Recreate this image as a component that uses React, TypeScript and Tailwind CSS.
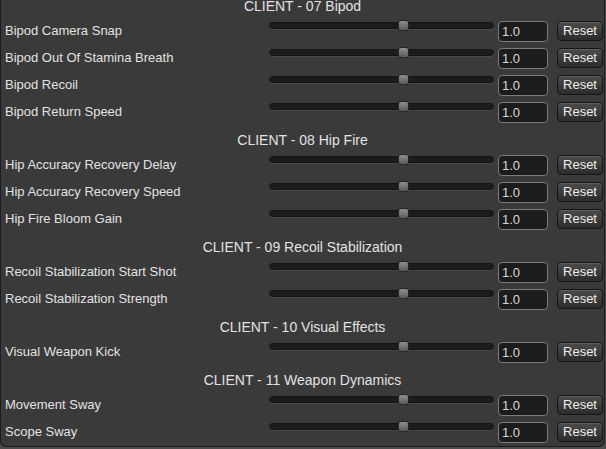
import React from 'react';

type Section = {
  title: string;
  rows: string[];
};

const sections: Section[] = [
  {
    title: 'CLIENT - 07 Bipod',
    rows: ['Bipod Camera Snap', 'Bipod Out Of Stamina Breath', 'Bipod Recoil', 'Bipod Return Speed'],
  },
  {
    title: 'CLIENT - 08 Hip Fire',
    rows: ['Hip Accuracy Recovery Delay', 'Hip Accuracy Recovery Speed', 'Hip Fire Bloom Gain'],
  },
  {
    title: 'CLIENT - 09 Recoil Stabilization',
    rows: ['Recoil Stabilization Start Shot', 'Recoil Stabilization Strength'],
  },
  {
    title: 'CLIENT - 10 Visual Effects',
    rows: ['Visual Weapon Kick'],
  },
  {
    title: 'CLIENT - 11 Weapon Dynamics',
    rows: ['Movement Sway', 'Scope Sway'],
  },
];

function SettingRow({ label }: { label: string }) {
  return (
    <div className="flex h-[27px] items-start">
      <div className="w-[268px] pl-[4px] pt-[5px] text-[13px] leading-[15px] text-[#e2e2e2] whitespace-nowrap">
        {label}
      </div>

      {/* slider */}
      <div className="relative mt-[4px] h-[7px] w-[225px] rounded-full border border-[#141414] bg-[#1c1c1c] shadow-[0_1px_0_#484848]">
        <div className="absolute left-[128px] top-[-3px] h-[11px] w-[11px] rounded-[3px] border border-[#262626] bg-gradient-to-b from-[#8e8e8e] to-[#5c5c5c]" />
      </div>

      <div className="ml-[4px] mt-[3px] flex h-[21px] w-[50px] items-center rounded-[4px] border border-[#7c7c7c] bg-[#1c1c1c] pl-[3px] text-[13px] leading-[15px] text-[#d8d8d8]">
        1.0
      </div>

      <button className="ml-[9px] mt-[3px] flex h-[20px] w-[46px] items-center justify-center rounded-[4px] border border-[#161616] bg-gradient-to-b from-[#4c4c4c] to-[#2c2c2c] text-[13px] text-[#ececec] shadow-[inset_0_1px_0_#5e5e5e]">
        Reset
      </button>
    </div>
  );
}

export default function App() {
  return (
    <div className="h-[449px] w-[606px] overflow-hidden bg-[#4c4c4c]" style={{ fontFamily: '"Liberation Sans", Arial, sans-serif' }}>
      <div className="h-[447px] w-[605px] overflow-hidden rounded-b-[6px] border border-t-0 border-[#1c1c1c] bg-[#3a3a3a]">
        <div className="-mt-[8px] flex flex-col">
          {sections.map((section) => (
            <div key={section.title} className="flex flex-col">
              <div className="flex h-[26px] items-center justify-center pt-[1px] text-[14px] leading-[16px] text-[#e2e2e2]">
                {section.title}
              </div>
              {section.rows.map((row) => (
                <SettingRow key={row} label={row} />
              ))}
            </div>
          ))}
        </div>
      </div>
    </div>
  );
}
